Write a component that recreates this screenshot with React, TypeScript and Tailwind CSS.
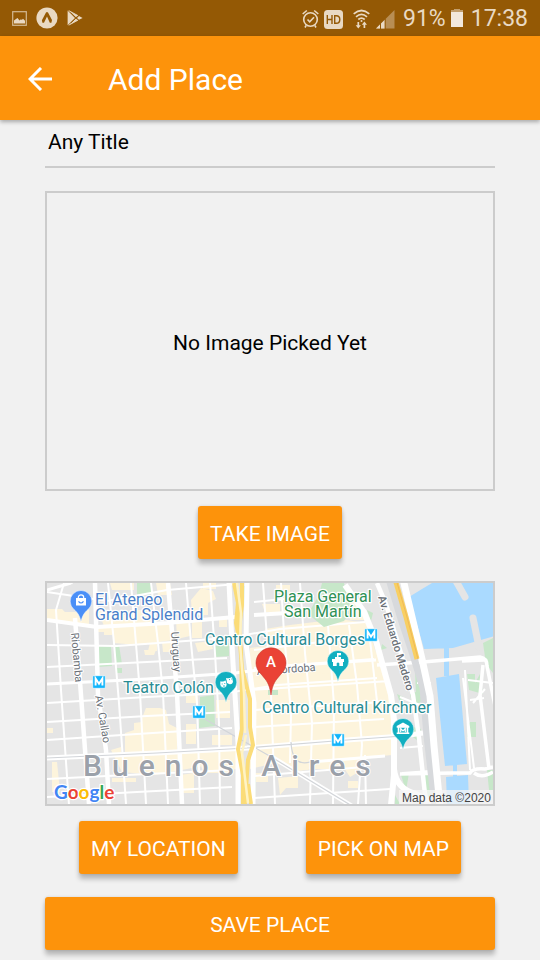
import type { ReactNode } from "react";

const halo = { paintOrder: "stroke" as const, strokeLinejoin: "round" as const };

function ActionButton({ children, wide = false }: { children: ReactNode; wide?: boolean }) {
  return (
    <button
      type="button"
      className={
        "h-[53px] rounded-[3px] bg-[#fd930b] px-3 pt-0.5 text-[21px] leading-6 whitespace-nowrap text-white shadow-[0_5px_5px_rgba(0,0,0,0.24),0_0_3px_rgba(0,0,0,0.12)] " +
        (wide ? "w-full" : "")
      }
    >
      {children}
    </button>
  );
}

function StatusBar() {
  return (
    <div className="flex h-9 items-center justify-between bg-[#945905] pr-3 pl-3 text-[#e9d9c3]">
      <div className="flex items-center gap-[9px]">
        <svg width="15" height="15" viewBox="0 0 15 15">
          <rect x="0.7" y="0.7" width="13.6" height="13.6" fill="none" stroke="currentColor" strokeWidth="1.2" opacity="0.75" />
          <path d="M2 12.5V9.5L4 8l1.5-1 2 2.5 1-1 1.5.3 1-1 2 2v2.7z" fill="currentColor" />
        </svg>
        <svg width="22" height="22" viewBox="0 0 22 22">
          <circle cx="11" cy="11" r="10.6" fill="currentColor" />
          <path d="M10 5.4q1-1 2 0l4 7.6-.6 2.7-1.6.1-2.8-6.2-3 6.2-1.6-.1-.5-2.4z" fill="#945905" />
        </svg>
        <svg width="16" height="16" viewBox="0 0 16 16">
          <path d="M.6.6 8 8 .6 15.2z" fill="currentColor" />
          <path d="M1.7.6 11 5.6 8.8 7.3zM1.7 15.2 11 10.2 8.8 8.6zM12 6.1l3.6 1.8L12 9.7 10 8z" fill="currentColor" />
          <path d="M1.7.6 11 5.6M1.7 15.2 11 10.2" stroke="currentColor" strokeWidth="0.8" />
          <path d="m4 2.9 5 5-5 5" fill="none" stroke="#945905" strokeWidth="0.9" />
        </svg>
      </div>
      <div className="flex items-center pt-0.5 text-[23px] leading-8">
        <svg width="17" height="20" viewBox="0 0 17 20" fill="none" stroke="currentColor" strokeWidth="1.6" className="mr-[5px]">
          <circle cx="8.5" cy="10.5" r="6.8" />
          <path d="m5.5 10.5 2.2 2.3L12 8.2M.7 5 4.8 1.5M16.300 5l-4.100-3.500M4.200 16.300l-1.200 2.200M12.800 16.300l1.200 2.200" />
        </svg>
        <svg width="19" height="19" viewBox="0 0 19 19" className="mr-2.5">
          <rect width="19" height="19" rx="3.5" fill="currentColor" />
          <path d="M3.3 5v9M8 5v9M3.3 9.5H8M10.7 5.7v7.6h1.6q3.5 0 3.5-3.8t-3.5-3.8z" fill="none" stroke="#945905" strokeWidth="1.4" />
        </svg>
        <svg width="17" height="20" viewBox="0 0 17 20" fill="none" stroke="currentColor" strokeWidth="1.7" className="mr-1.5">
          <path d="M.7 4.8q7.8-6.6 15.6 0M3 7.8q5.5-4.8 11 0M5.3 10.5q3.2-2.8 6.4 0" />
          <circle cx="8.5" cy="12" r="1" fill="currentColor" stroke="none" />
          <path d="M5.3 13v4M11.4 19v-4" />
          <path d="M2.7 16.2h5.2l-2.6 3.3zM8.8 15.7H14l-2.6-3.2z" fill="currentColor" stroke="none" />
        </svg>
        <svg width="19" height="19" viewBox="0 0 19 19" className="mr-2">
          <path d="M0 18.5 18.5 0v18.5z" fill="currentColor" opacity="0.42" />
          <path d="M0 18.5 4.2 14.3v4.2zM5 18.5v-5l3.8-3.8v8.8z" fill="currentColor" />
          <path d="M4.5 13v6M9.2 9v10" stroke="#945905" />
        </svg>
        <span>91%</span>
        <svg width="12" height="18" viewBox="0 0 12 18" className="mr-2 mb-0.5 ml-[5px]">
          <path d="M3 0h6v1h3v2H0V1h3z" fill="currentColor" opacity="0.55" />
          <path d="M0 3h12v15H0z" fill="#f2e8dc" />
        </svg>
        <span>17:38</span>
      </div>
    </div>
  );
}

function Pin({ x, y, color, children }: { x: number; y: number; color: string; children: ReactNode }) {
  return (
    <g transform={`translate(${x} ${y})`}>
      <path
        d="M0 20.5C-1.5 14-4 11-7 8.5A10.8 10.8 0 1 1 7 8.5C4 11 1.5 14 0 20.5z"
        fill={color}
        stroke="#fff"
        strokeOpacity="0.6"
        strokeWidth="0.8"
      />
      {children}
    </g>
  );
}

function Metro({ x, y }: { x: number; y: number }) {
  return (
    <g transform={`translate(${x} ${y})`}>
      <rect x="-6.3" y="-6.3" width="12.6" height="12.6" rx="1" fill="#12b5fb" stroke="#fff" strokeWidth="0.6" />
      <path d="M-3.4 3.5v-7L0 1.8l3.4-5.3v7" fill="none" stroke="#fff" strokeWidth="1.9" />
    </g>
  );
}

function StreetMap() {
  return (
    <svg
      viewBox="47 583 446 221"
      preserveAspectRatio="xMidYMid slice"
      className="block h-full w-full"
      role="img"
      aria-label="Map of Buenos Aires"
      fontFamily="Roboto, sans-serif"
    >
      <rect x="40" y="575" width="460" height="240" fill="#e5e5e5" />

      {/* commercial blocks */}
      <g fill="#fdf4dc">
        <path d="M47 609h15l3 3h14v-3h10v16l-42-5zM98 611h12v4h20v-5h24v12l-50 4zM110 583h24v7h-22zM156 583h14l2 12h-14zM113 626l50-3 10 1v16l-34 5-26-2zM98 625h14v10h-8v-3h-6zM176 620h14v16l-13 3zM150 643h7v8h-9zM162 642h13v10h-12zM144 650h12l-2 5h-9z" />
        <path d="M191 600l10-12 12 3 3 8-8 4v12h-16zM195 643l16-2 2 8-15 3zM192 622h10v16h-10zM219 617h8v10h-8zM203 583h13v6h-13z" />
        <path d="M250 648l100-13 30 20 9 30 6 40-3 30-30 3-8 12-30-2-26 3-22-8-26 6-2-60z" />
        <path d="M265 629l25-4 50-6 26 4 12 35-12 20-90-10zM276 585h14v8h-14zM330 640h34l20 64h-40zM350 600h8l10 20h-18zM262 604h18v8h-15z" />
        <path d="M142 718l4-10h14l6 2 3 14 8 4v22l-52 4v-21l9-3v-7l8-1zM47 728h6v5h-6zM186 724h10v20h-10zM111 750l10-3v8l80-4 36-4v22l-26 3-8-6-48 9-33-3zM52 762h5l3 30h-8zM112 778h24v4h-24zM180 775l14-2v20h-12zM194 749h40v24h-30zM254 773h14v9h-14zM278 778l20-2v12h-12l-6 7zM312 757h22v12h-22zM344 768l16-5 4 6-14 8zM186 695h12v8h-12zM212 735h20v10h-20zM216 700h14v18h-14zM348 781h10v7h-10z" />
      </g>

      {/* parks */}
      <g fill="#c7e7c9">
        <path d="M97 646h14l1 20-15 1zM137 583h14l1 11-15 2zM114 646l5-1 3 19h-6zM116 668h6v5h-6zM215 646l14-3v13l-14 1zM200 697l14-2 1 31-16 2zM244 586h3l-2 40z" />
        <path d="M367 610l6 3-2 8zM382 644l5 4-6 2zM415 670h7l2 26h-8zM483 643l10-5v35l-7-9zM470 722h6v15h-9v-10zM467 674h8v9l5-9 3 20-14-4zM397 694l6 3-2 9zM410 694l14-5 1 10-12 8zM413 727l8 2-2 13-6-5zM401 775l8-2-3 18zM421 772h12l5 27h-9zM487 770h6v20h-4zM395 795l5 9h-5zM251 777h5l-1 22h-3zM268 695h10v-5h-10z" />
      </g>

      {/* docks */}
      <g fill="#aadaff">
        <path d="M409 597l13-8 10-6h63v53l-42 12-29 1zM444 647h5v29h-5zM436 678l23-4 8 90-22 2zM453 764h4v14h-4zM446 777l22-2 1 29h-22z" />
      </g>
      <g stroke="#e5e5e5" strokeLinecap="round">
        <path d="M456 581l9 16" strokeWidth="7" />
        <path d="M473 618l6 29" strokeWidth="7" />
      </g>

      {/* minor streets */}
      <g fill="none" stroke="#fff" strokeWidth="2">
        <path d="M64 583l-8 27 5 80 8 115M108 583l6 60 5 60 7 101M131 583l9 110 6 111M151 583l7 60 5 50 5 111M186 583l5 60 6 60 3 101M210 583l5 70 4 70 1 81M263 583l8 110 4 111M281 583l3 50 7 80-1 50M300 583l5 70 7 70-2 81M328 625l6 80-1 99M349 625l8 60 5 60-4 59M370 640l8 70M365 755l1 50" />
        <path d="M47 592l60 9 60-11 70-6M47 645l70 1 110-8 53-9 85-7M47 667l60-3 120-6M47 703l100-6 80-4 50-8 100-7M47 722l100-6 83-4M47 740l90-6 95-6M254 727l130-8M254 710l130-8M47 779l100-5 85-4M47 797l90-5 95-5M254 776l110-9M254 798l136-9M254 650l100-12M254 668l120-9M254 602l60-6M250 690l140-9M400 697l20 8M400 748l23-2M402 773l28-2M468 680l25 3M470 700l14-2M485 689l-12 14M417 683h14" />
      </g>
      <path d="M322 583h22l7 28-7 10-20 6-16-13 11-19z" fill="#c7e7c9" />

      {/* avenues */}
      <g fill="none" stroke="#fff" strokeWidth="4.5">
        <path d="M75 618l6 77 8 109M95 583l3 112 8 55 3 54M168 583l9 110 5 111" />
        <path d="M47 620l50 7 70-4 68-6M254 615l50-3" strokeWidth="4" />
        <path d="M47 684l100-5 88-6 60-8M300 665l76-5" strokeWidth="3" />
        <path d="M47 758l110-5 90-5 100-8 56-4 20-3" strokeWidth="5" />
        <path d="M272 757l80 49" />
        <path d="M310 762l75-6" strokeWidth="3" />
        <path d="M73 583l-6-4M47 590l24-7" strokeWidth="3" />
        <path d="M345 585l19 27 12 29 15 54 3 25v55l-3 30M394 769q2 20 22 25l20 10" strokeWidth="6" />
        <path d="M377 583l9 21 14 46 13 45 6 43 7 66" strokeWidth="4.5" />
        <path d="M377 665l46-3 57-5q7 1 7 9l8 40M484 660l-22 1M400 774l52-1h18q3-5 15-4l8-2M474 773q8 6 19-1M483 665l-3 30 9 74" strokeWidth="3.5" />
        <path d="M465 670l5 100M463 678l11 90" strokeWidth="2" />
      </g>
      <path d="M47 758l110-5 90-5 100-8 56-4M203 718l70 40 79 48M310 762q-18 5-19-20" fill="none" stroke="#d2d5d9" strokeWidth="1.2" />

      {/* central avenue */}
      <g fill="none">
        <path d="M229 583l4 80 5 80v61M247 583l-1 60 8 60-1 101" stroke="#fff" strokeWidth="5" />
        <path d="M234 583l4 20-2 20 5 26 1 50v30l-4 20 5 26v30M242 583v22l-3 24 3 40 8 30v28l3 18-5 15-3 44M248 784l3 20" stroke="#fbdc78" strokeWidth="4" />
        <path d="M237 583l4 30-1 30 4 50 1 40M246 735l-4 18 6 50" stroke="#fff3c4" strokeWidth="2.5" />
      </g>

      {/* coastal highway and rail strip */}
      <g fill="none">
        <path d="M389 579l12 40 13 39 9 30 4 48 8 70" stroke="#d7d9dc" strokeWidth="7" />
        <path d="M403 579l19 80 8 37 4 50 6 60" stroke="#fff" strokeWidth="7" />
        <path d="M395 579l11 38 11 42" stroke="#f8cf62" strokeWidth="5" />
        <path d="M396 579l11 38 11 42" stroke="#f0b958" strokeWidth="1" />
      </g>

      {/* street names */}
      <g fontSize="11" fill="#6b7178" stroke="#fff" strokeWidth="2" style={halo}>
        <text transform="translate(71 633) rotate(85)">Riobamba</text>
        <text transform="translate(171 632) rotate(86)">Uruguay</text>
        <text transform="translate(95 696) rotate(80)">Av. Callao</text>
        <text transform="translate(378 597) rotate(73)" fontWeight="500">Av. Eduardo Madero</text>
        <text transform="translate(257 675) rotate(-4)">Av. Córdoba</text>
      </g>

      <text x="83" y="776" fontSize="30" fontWeight="500" fill="#9ba1aa" stroke="#fff" strokeWidth="2" className="tracking-[10px]" style={halo}>
        Buenos Aires
      </text>

      {/* places */}
      <g fontSize="16" stroke="#fff" strokeWidth="2.5" style={halo}>
        <g fill="#4a7fc9">
          <text x="95" y="605">El Ateneo</text>
          <text x="95" y="620">Grand Splendid</text>
        </g>
        <g fill="#2f9155">
          <text x="274" y="602">Plaza General</text>
          <text x="284" y="617">San Martín</text>
        </g>
        <g fill="#2a8c93">
          <text x="205" y="645">Centro Cultural Borges</text>
          <text x="123" y="693">Teatro Colón</text>
          <text x="262" y="713">Centro Cultural Kirchner</text>
        </g>
      </g>

      <Metro x={371} y={635} />
      <Metro x={99} y={682} />
      <Metro x={199} y={712} />
      <Metro x={338} y={740} />

      <Pin x={81} y={601} color="#4a8ff7">
        <path d="M-5-3H5V4.5H-5z" fill="#fff" />
        <path d="M-2.7-2v-1.5a2.7 2.7 0 0 1 5.4 0V-2" fill="none" stroke="#fff" strokeWidth="1.2" />
        <path d="M-2.5.3q2.5 3.4 5 0" fill="none" stroke="#4a8ff7" strokeWidth="1.2" />
      </Pin>
      <Pin x={226} y={682} color="#12afc0">
        <path d="M0-4q3 1 6-1l1 5q-1 3-4 2L1 1z" fill="#fff" />
        <path d="M-6-1q3 1 6-1l1 5q-1 3-3 3-3 0-4-3z" fill="#fff" stroke="#12afc0" strokeWidth="0.6" />
        <path d="M-4.3 2h1M-1.7 1.5h1M-3 4h2M3-2.4h1M5-3h.8" stroke="#12afc0" strokeWidth="0.9" />
      </Pin>
      <Pin x={338} y={661} color="#12afc0">
        <path d="M-6-2h3v-2h2v-4h4v2.3H.5V-4h2.5v2h3v3h-1v4H-5V1h-1z" fill="#fff" />
        <path d="M-1.3 5V2.3q1.3-1.7 2.6 0V5z" fill="#12afc0" />
      </Pin>
      <Pin x={403} y={729} color="#12afc0">
        <path d="M0-6.5 6.3-3v1.7h-1v4.8h1v1.6H-6.3V3.5h1v-4.8h-1V-3z" fill="#fff" />
        <path d="M-3.6-1.2h7.2v4.7h-7.2z" fill="#12afc0" />
        <path d="M-2.3 3.2v-3.6L0 2l2.3-2.400v3.6" fill="none" stroke="#fff" strokeWidth="1.2" />
      </Pin>

      <path d="M271 695c-1.500-12-5-15-10-21a15 15 0 1 1 20 0c-5 6-8.500 9-10 21z" fill="#ea4335" stroke="#c5352b" strokeWidth="0.6" />
      <text x="271" y="667" textAnchor="middle" fontSize="15" fontWeight="500" fill="#fff">
        A
      </text>

      <text x="54" y="799" fontFamily="Lato, Roboto, sans-serif" fontSize="19" fontWeight="700" stroke="#fff" strokeWidth="2.5" style={halo}>
        <tspan fill="#4285f4">G</tspan>
        <tspan fill="#ea4335">o</tspan>
        <tspan fill="#fbbc05">o</tspan>
        <tspan fill="#4285f4">g</tspan>
        <tspan fill="#34a853">l</tspan>
        <tspan fill="#ea4335">e</tspan>
      </text>

      <rect x="399" y="790" width="96" height="16" fill="#f5f5f5" fillOpacity="0.75" />
      <text x="402" y="802" fontSize="12" fontFamily="'Liberation Sans', Arial, sans-serif" fill="#444">
        Map data ©2020
      </text>
    </svg>
  );
}

export default function App() {
  return (
    <div className="min-h-screen bg-[#f1f1f1] font-[Roboto,sans-serif] text-black">
      <StatusBar />
      <header className="flex h-21 items-center bg-[#fd930b] pt-0.5 pl-7 text-white shadow-[0_2px_4px_rgba(0,0,0,0.3)]">
        <button type="button" aria-label="Back" className="mr-14 h-6 w-6">
          <svg width="24" height="24" viewBox="0 0 24 24" fill="none" stroke="currentColor" strokeWidth="3">
            <path d="M24 12H2.5M13 1 2 12l11 11" />
          </svg>
        </button>
        <h1 className="pt-0.5 text-[30px] leading-9">Add Place</h1>
      </header>

      <main className="flex flex-col px-[45px] pb-2.5">
        <input
          type="text"
          aria-label="Title"
          defaultValue="Any Title"
          className="h-12 w-full border-b-2 border-[#cccccc] bg-transparent px-[3px] pb-0.5 text-[21px] outline-none"
        />

        <div className="mt-[23px] flex h-[300px] items-center justify-center border-2 border-[#cccccc] pt-1">
          <p className="text-[21px] leading-6">No Image Picked Yet</p>
        </div>
        <div className="mt-[15px] flex justify-center">
          <ActionButton>TAKE IMAGE</ActionButton>
        </div>

        <div className="mt-[22px] h-[225px] overflow-hidden border-2 border-[#cccccc]">
          <StreetMap />
        </div>
        <div className="mt-[15px] flex justify-around">
          <ActionButton>MY LOCATION</ActionButton>
          <ActionButton>PICK ON MAP</ActionButton>
        </div>

        <div className="mt-[23px]">
          <ActionButton wide>SAVE PLACE</ActionButton>
        </div>
      </main>
    </div>
  );
}
